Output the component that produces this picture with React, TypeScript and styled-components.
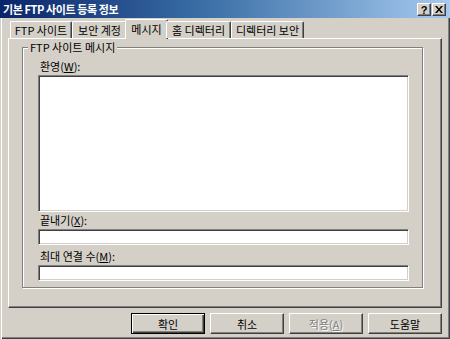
import React from "react";
import styled, { createGlobalStyle, css } from "styled-components";

const GlobalStyle = createGlobalStyle`
  html, body { margin:0; padding:0; background:#d4d0c8; overflow:hidden; }
  body { font-family:"Noto Sans CJK KR", "Noto Sans", sans-serif; font-size:11px; color:#000; }
  * { box-sizing:border-box; }
`;

const Window = styled.div`
  width:450px; height:339px; display:flex; flex-direction:column; background:#d4d0c8;
`;

const TitleBar = styled.div`
  height:18px; flex:none; display:flex; align-items:center; justify-content:space-between;
  padding:0 4px 0 3px; color:#fff; font-weight:bold; letter-spacing:-0.4px;
  background:linear-gradient(to right, #0a246a 0%, #3a6ea5 45%, #a6caf0 100%);
`;

const Caption = styled.div`
  display:flex; gap:1px; margin-top:1px;
`;

const CaptionButton = styled.div`
  width:14px; height:13px; display:flex; align-items:center; justify-content:center;
  background:#d4d0c8; color:#000; font:bold 11px "Liberation Sans", sans-serif;
  border:1px solid; border-color:#fff #404040 #404040 #fff; box-shadow:inset -1px -1px 0 #808080;
`;

const Body = styled.div`
  flex:1; display:flex; flex-direction:column; padding:1px 8px 0 8px;
  box-shadow:inset 1px 0 0 #d4d0c8, inset 2px 0 0 #fff, inset -1px -1px 0 #404040, inset -2px -2px 0 #808080;
`;

const TabRow = styled.div`
  height:19px; display:flex; align-items:flex-end; padding-left:2px; position:relative; z-index:1;
`;

const Tab = styled.div<{ $w: number; $active?: boolean }>`
  width:${p => p.$w}px; height:17px; flex:none; display:flex; align-items:center; justify-content:center;
  background:#d4d0c8; white-space:nowrap;
  border-top:1px solid #fff; border-left:1px solid #fff; border-right:1px solid #404040;
  border-radius:2px 2px 0 0; box-shadow:inset -1px 0 0 #808080;
  ${p => p.$active && css`
    width:${p.$w + 4}px; height:20px; margin:0 -2px -1px; padding-bottom:2px;
  `}
`;

const Panel = styled.div`
  height:270px; display:flex; flex-direction:column; padding:2px 18px 18px 13px;
  border:1px solid; border-color:#fff #404040 #404040 #fff; box-shadow:inset -1px -1px 0 #808080;
`;

const Group = styled.fieldset`
  margin:0; padding:0; min-width:0; border:1px solid #808080;
  box-shadow:inset 1px 1px 0 #fff, 1px 1px 0 #fff;
`;

const Legend = styled.legend`
  margin-left:5px; padding:0 2px; line-height:13px; height:13px; background:#d4d0c8;
`;

const GroupBody = styled.div`
  display:flex; flex-direction:column; padding:6px 13px 6px 15px;
`;

const Label = styled.label<{ $gap?: number }>`
  display:block; height:13px; line-height:13px; padding-left:2px; margin-top:${p => p.$gap ?? 0}px;
`;

const sunken = css`
  border:1px solid; border-color:#808080 #fff #fff #808080;
  box-shadow:inset 1px 1px 0 #404040, inset -1px -1px 0 #d4d0c8; background:#fff;
`;

const Field = styled.div<{ $h: number }>`
  ${sunken}; height:${p => p.$h}px; margin-top:2px;
`;

const Buttons = styled.div`
  display:flex; justify-content:flex-end; gap:5px; margin-top:5px;
`;

const Button = styled.div<{ $default?: boolean; $disabled?: boolean }>`
  width:74px; height:21px; display:flex; align-items:center; justify-content:center; background:#d4d0c8;
  border:1px solid; border-color:#fff #404040 #404040 #fff; box-shadow:inset -1px -1px 0 #808080;
  ${p => p.$default && css`
    border:1px solid #000; box-shadow:inset 1px 1px 0 #fff, inset -1px -1px 0 #404040, inset -2px -2px 0 #808080;
  `}
  ${p => p.$disabled && css`color:#808080; text-shadow:1px 1px 0 #fff;`}
`;

const tabs = [
  { label: "FTP 사이트", w: 62 },
  { label: "보안 계정", w: 55 },
  { label: "메시지", w: 39, active: true },
  { label: "홈 디렉터리", w: 65 },
  { label: "디렉터리 보안", w: 73 },
];

export default function App() {
  return (
    <Window>
      <GlobalStyle />
      <TitleBar>
        <span>기본 FTP 사이트 등록 정보</span>
        <Caption>
          <CaptionButton>?</CaptionButton>
          <CaptionButton>
            <svg width="8" height="7" viewBox="0 0 8 7">
              <path d="M0 0h2l2 2.5L6 0h2L5 3.5 8 7H6L4 4.5 2 7H0l3-3.5z" fill="#000" />
            </svg>
          </CaptionButton>
        </Caption>
      </TitleBar>
      <Body>
        <TabRow>
          {tabs.map(t => <Tab key={t.label} $w={t.w} $active={t.active}>{t.label}</Tab>)}
        </TabRow>
        <Panel>
          <Group>
            <Legend>FTP 사이트 메시지</Legend>
            <GroupBody>
              <Label>환영(<u>W</u>):</Label>
              <Field $h={137} />
              <Label $gap={2}>끝내기(<u>X</u>):</Label>
              <Field $h={16} />
              <Label $gap={5}>최대 연결 수(<u>M</u>):</Label>
              <Field $h={16} />
            </GroupBody>
          </Group>
        </Panel>
        <Buttons>
          <Button $default>확인</Button>
          <Button>취소</Button>
          <Button $disabled>적용(<u>A</u>)</Button>
          <Button>도움말</Button>
        </Buttons>
      </Body>
    </Window>
  );
}
